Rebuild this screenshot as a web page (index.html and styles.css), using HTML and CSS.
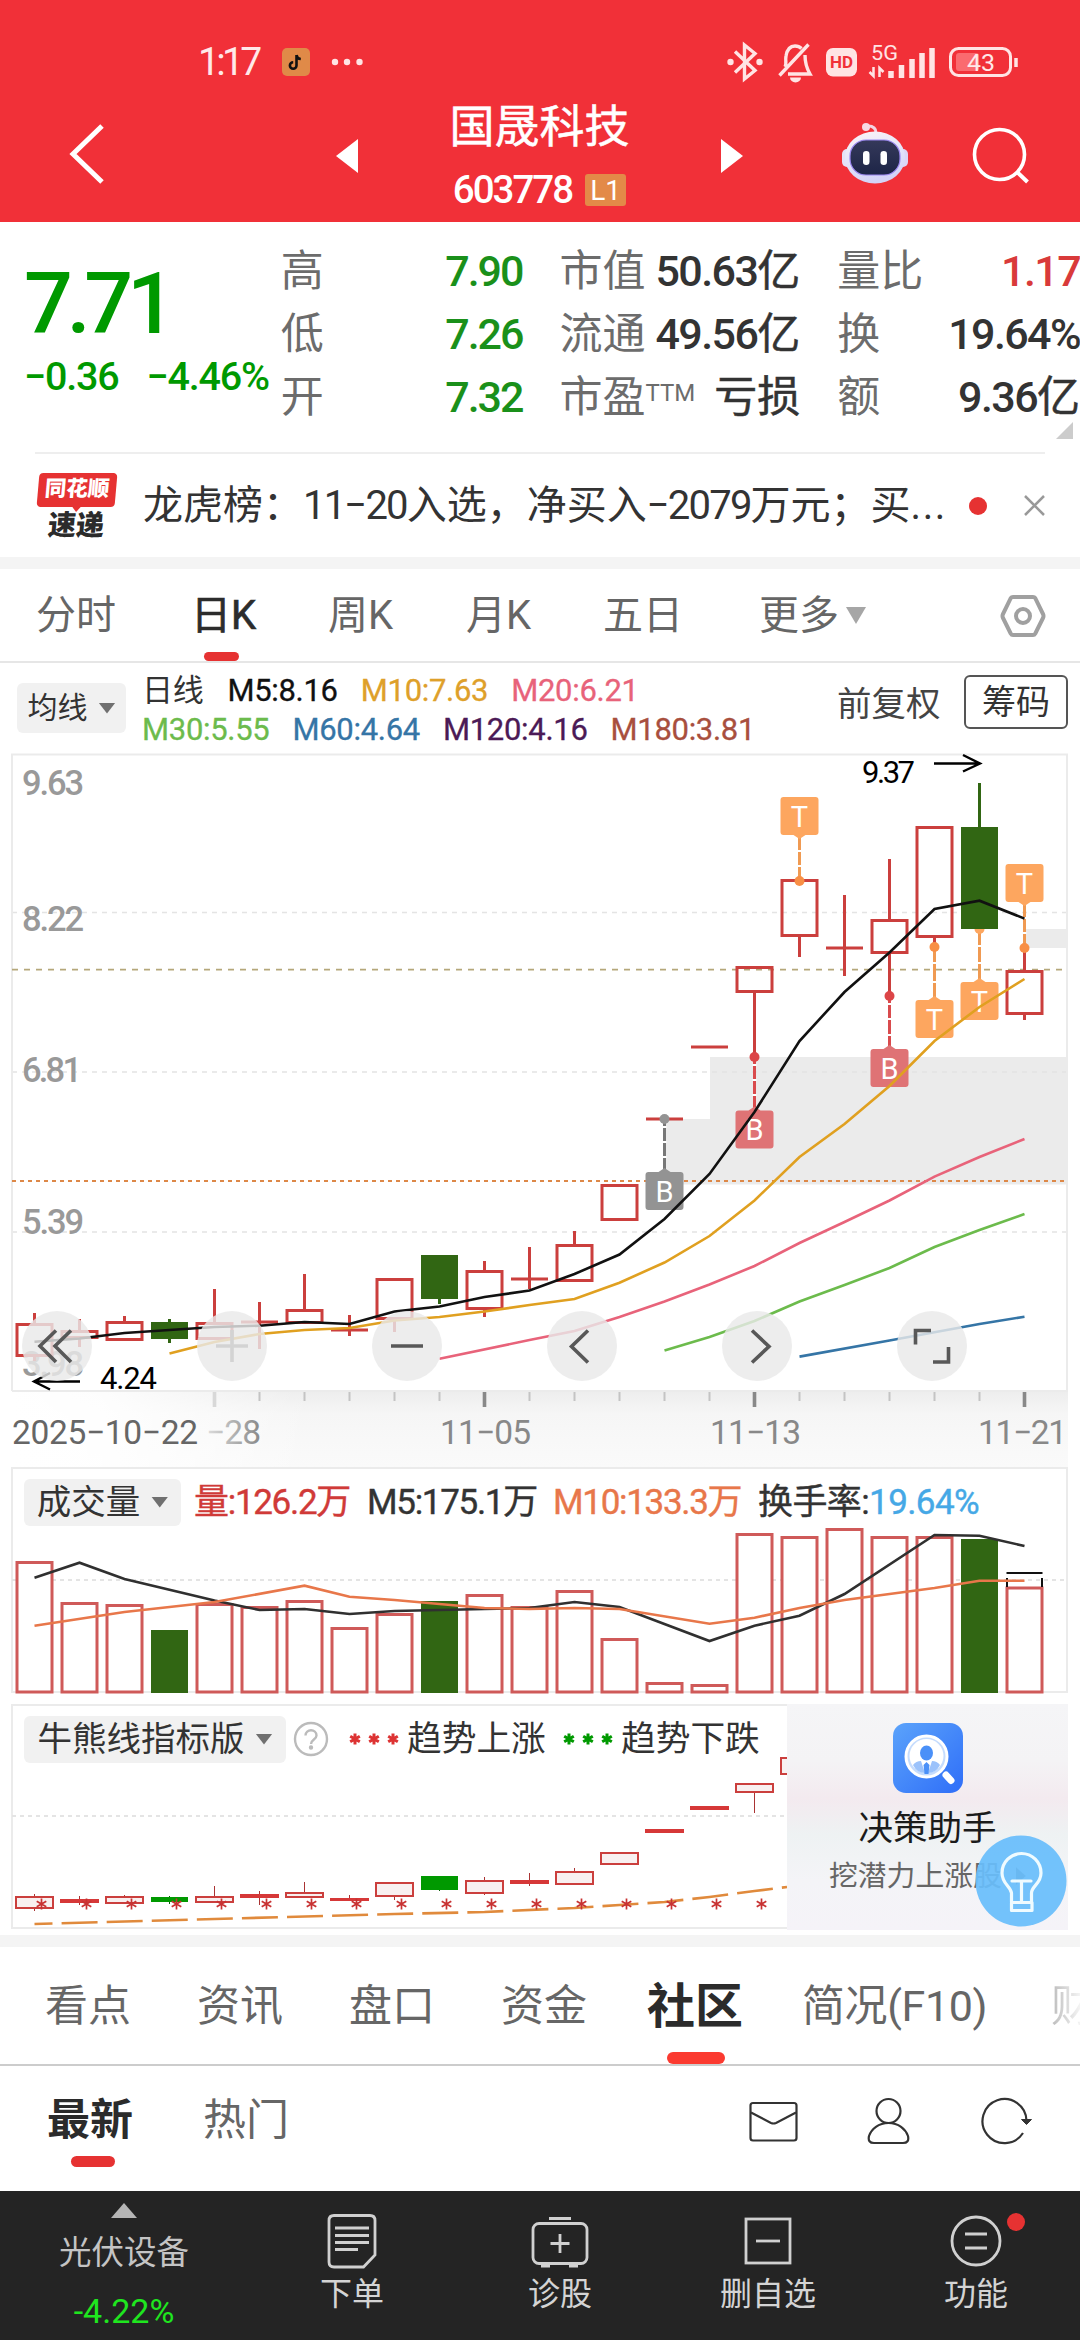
FILE: index.html
```html
<!DOCTYPE html>
<html lang="zh-CN">
<head>
<meta charset="utf-8">
<title>国晟科技 603778</title>
<link rel="stylesheet" href="styles.css">
</head>
<body>
<header class="top">
  <div class="status">
    <span class="clock">1:17</span>
    <svg class="app" width="28" height="28" viewBox="0 0 28 28"><rect width="28" height="28" rx="5" fill="#e08a48"/><path d="M14.5 7v10.500a3.300 3.300 0 1 1-3.300-3.300M14.500 7c.3 2.500 2 3.800 4.300 4" fill="none" stroke="#111" stroke-width="2.600"/></svg>
    <svg class="dots" width="32" height="8" viewBox="0 0 32 8" fill="#ffe4e4"><circle cx="4" cy="4" r="3.200"/><circle cx="16" cy="4" r="3.200"/><circle cx="28.500" cy="4" r="3.200"/></svg>
    <svg class="sys" width="300" height="44" viewBox="722 40 300 44" fill="none" stroke="#ffe4e4" stroke-width="3.400">
      <path d="M735 51.500l20 19-10.500 8.500V45l10.500 8.500-20 19"/><circle cx="730.500" cy="62" r="3.200" fill="#ffe4e4" stroke="none"/><circle cx="759.500" cy="62" r="3.200" fill="#ffe4e4" stroke="none"/>
      <path d="M785 67c2-3 0-6 1-11 1-6 4-10 9-10 3 0 5 1 6.500 2.500M805 55c0 7 1.500 13 5 19h-22M779.500 75.500l29-31"/><path d="M790 77.500h11a5.500 5 0 0 1-11 0z" fill="#ffe4e4" stroke="none"/>
      <rect x="826" y="48" width="31" height="28.500" rx="7" fill="#ffe4e4" stroke="none"/>
      <text x="830" y="68" class="hd" textLength="23" lengthAdjust="spacingAndGlyphs">HD</text>
      <text x="871" y="60" class="g5" textLength="27" lengthAdjust="spacingAndGlyphs">5G</text>
      <path d="M873.500 67v9l-4-4M879.500 77v-9l4 4" stroke-width="2.500"/>
      <path d="M891 78v-7M901.500 78V65M912 78V59M922 78V53M932 78V48" stroke-width="5.500"/>
      <rect x="950.500" y="48.500" width="60" height="27" rx="8" stroke-width="3"/><rect x="956" y="53" width="23" height="18" rx="3" fill="#fa6b6f" stroke="none"/><path d="M1016 58v9" stroke-width="3.500"/>
      <text x="967" y="70.500" class="bat" textLength="28" lengthAdjust="spacingAndGlyphs">43</text>
    </svg>
  </div>
  <div class="titlebar">
    <svg class="back" width="40" height="64" viewBox="66 122 40 64"><path d="M102 126L73 154l29 28" fill="none" stroke="#fff" stroke-width="5"/></svg>
    <svg class="prev" width="22" height="34" viewBox="0 0 22 34"><path d="M22 0v34L0 17z" fill="#fff"/></svg>
    <div class="name"><h1>国晟科技</h1><p><span>603778</span><b>L1</b></p></div>
    <svg class="next" width="22" height="34" viewBox="0 0 22 34"><path d="M0 0v34l22-17z" fill="#fff"/></svg>
    <svg class="robot" width="68" height="64" viewBox="841 121 68 64">
      <defs><linearGradient id="rb" x1="0" y1="0" x2=".3" y2="1"><stop offset="0" stop-color="#fdf3f6"/><stop offset=".5" stop-color="#e6e6fa"/><stop offset="1" stop-color="#d3d3f7"/></linearGradient><linearGradient id="rs" x1="0" y1="0" x2="0" y2="1"><stop offset="0" stop-color="#35395a"/><stop offset="1" stop-color="#1d2547"/></linearGradient></defs>
      <path d="M876 133c0-5-3-7-8-7" fill="none" stroke="#f3d3e2" stroke-width="3"/><circle cx="866" cy="127" r="4" fill="#f7d9e4"/>
      <rect x="842" y="149" width="12" height="18" rx="5" fill="#e4e3f8"/><rect x="896" y="149" width="12" height="18" rx="5" fill="#dcd6f6"/>
      <ellipse cx="875" cy="157.500" rx="30" ry="26" fill="url(#rb)"/>
      <rect x="850" y="140" width="50" height="35" rx="16" fill="url(#rs)" stroke="#9a86f0" stroke-width="1.200"/><rect x="863" y="151" width="6.500" height="14" rx="3.200" fill="#fff"/><rect x="880.500" y="151" width="6.500" height="14" rx="3.200" fill="#fff"/>
    </svg>
    <svg class="search" width="60" height="60" viewBox="970 125 60 60" fill="none" stroke="#fff" stroke-width="3.600"><circle cx="999.500" cy="154.500" r="25"/><path d="M1017 172l10.500 10" stroke-width="4"/></svg>
  </div>
</header>

<section class="quote">
  <div class="last"><strong>7.71</strong><p><span>−0.36</span><span>−4.46%</span></p></div>
  <dl class="c1"><dt>高</dt><dd>7.90</dd><dt>低</dt><dd>7.26</dd><dt>开</dt><dd>7.32</dd></dl>
  <dl class="c2"><dt>市值</dt><dd>50.63<i>亿</i></dd><dt>流通</dt><dd>49.56<i>亿</i></dd><dt>市盈<sup>TTM</sup></dt><dd><i>亏损</i></dd></dl>
  <dl class="c3"><dt>量比</dt><dd class="up">1.17</dd><dt>换</dt><dd>19.64%</dd><dt>额</dt><dd>9.36<i>亿</i></dd></dl>
  <svg class="corner" width="17" height="17" viewBox="0 0 17 17"><path d="M17 0v17H0z" fill="#ccc"/></svg>
</section>

<section class="news">
  <div class="brand"><span class="b1">同花顺</span><span class="b2">速递</span></div>
  <p>龙虎榜：<span>11−20</span>入选，净买入<span>−2079</span>万元；买<em>...</em></p>
  <i class="reddot"></i>
  <svg width="21" height="21" viewBox="0 0 21 21"><path d="M1 1l19 19M20 1L1 20" stroke="#999" stroke-width="2.500"/></svg>
</section>

<nav class="periods">
  <a class="p1">分时</a><a class="p2 on">日K</a><a class="p3">周K</a><a class="p4">月K</a><a class="p5">五日</a><a class="p6">更多</a>
  <svg class="more" width="20" height="17" viewBox="0 0 20 17"><path d="M0 0h20L10 17z" fill="#a6a6a6"/></svg>
  <svg class="hex" width="46" height="44" viewBox="0 0 46 44" fill="none" stroke="#a0a0a0" stroke-width="4"><path d="M13 3h20q1.500 0 2.300 1.200L43 20q1 2 0 4l-7.700 15.500Q34.500 41 33 41H13q-1.500 0-2.300-1.500L3 24q-1-2 0-4L10.700 4.200Q11.500 3 13 3z"/><circle cx="23" cy="22" r="7"/></svg>
</nav>

<section class="mas">
  <button class="pill">均线<i class="tri"></i></button>
  <div class="legend">
    <p><span class="dk day">日线</span><span class="bk">M5:8.16</span><span class="or">M10:7.63</span><span class="pk">M20:6.21</span></p>
    <p><span class="gr">M30:5.55</span><span class="bl">M60:4.64</span><span class="pu">M120:4.16</span><span class="br">M180:3.81</span></p>
  </div>
  <span class="adj">前复权</span><button class="chip">筹码</button>
</section>

<svg class="kline" width="1080" height="714" viewBox="0 753 1080 714">
  <defs>
    <linearGradient id="ax" x1="0" y1="0" x2="0" y2="1"><stop offset="0" stop-color="#ededed"/><stop offset=".3" stop-color="#f6f6f6"/><stop offset="1" stop-color="#fafafa"/></linearGradient>
    <linearGradient id="fade"><stop offset="0" stop-color="#fff"/><stop offset=".3" stop-color="#fff" stop-opacity=".9"/><stop offset="1" stop-color="#fff" stop-opacity="0"/></linearGradient>
    <linearGradient id="tf"><stop offset="0" stop-color="#ddd"/><stop offset="1" stop-color="#888"/></linearGradient>
  </defs>
  <rect x="12" y="1391" width="1056" height="76" fill="url(#ax)"/><rect x="12" y="1392" width="300" height="75" fill="url(#fade)"/>
  <path d="M664.500 1119H710v-62h358v127.500H664.500zM1024.500 929H1068v19h-43.500z" fill="#ebebeb"/>
  <path d="M12 912.500h1056M12 1072h1056M12 1232h1056" class="grid"/>
  <g class="ylab"><text x="22" y="795" textLength="62">9.63</text><text x="22" y="930.500" textLength="62">8.22</text><text x="22" y="1082" textLength="60">6.81</text><text x="22" y="1233.500" textLength="62">5.39</text><text x="22" y="1376" textLength="62">3.98</text></g>
  <path d="M12 1391V754.500h1055V1391M12 1391h1056" class="frame"/>
  <path d="M12 969.700h1056" stroke="#b5a77a" stroke-width="1.800" stroke-dasharray="6 6"/>
  <path d="M12 1181h1056" stroke="#dd8848" stroke-width="2.200" stroke-dasharray="4 4"/>
  <path class="candle" d="M17 1324.500h35v31h-35zM62 1331.500h35v6h-35zM107 1322.500h35v17h-35zM197 1323.500h35v15h-35zM287 1310.500h35v12h-35zM377 1279.500h35v39h-35zM467 1271.500h35v37h-35zM557 1245.500h35v35h-35zM602 1185.500h35v34h-35zM737 967.500h35v24h-35zM782 880.500h35v55h-35zM872 920.500h35v32h-35zM917 827.500h35v109h-35zM1007 971.500h35v42h-35z
  M34.500 1323v-10M34.500 1357v4M79.500 1330v-11M79.500 1338v9M124.500 1321v-5M214.500 1322v-33M304.500 1309v-35M394.500 1320v12M484.500 1270v-9M484.500 1310v7M574.500 1244v-13M754.500 993v64M799.500 937v20M889.500 919v-60M889.500 954v42M934.500 938v10M1024.500 970v-22M1024.500 1015v5
  M241 1322h37M259.500 1302v47M331 1330h37M349.500 1315v21M511 1279h37M529.500 1247v42M646 1119h37M691 1047h37M826 948h37M844.500 895v81"/>
  <path fill="#316613" d="M151 1322h37v17h-37zM168 1319h3v24h-3zM421 1255h37v44h-37zM438 1299h3v5h-3zM961 827h37v102h-37zM978 783h3v44h-3z"/>
  <g class="mark m-o"><path d="M799.500 836v45M1024.500 902v46M934.500 947v53M979.500 930v52"/><circle cx="799.500" cy="881" r="5"/><circle cx="1024.500" cy="948" r="5"/><circle cx="934.500" cy="947" r="5"/><path class="dot" d="M974.500 929a5 5 0 0 0 10 0z"/>
    <path class="dot" d="M783.500 797h32q3 0 3 3v32q0 3-3 3h-10l-6 4-6-4h-10q-3 0-3-3v-32q0-3 3-3zM1008.500 864h32q3 0 3 3v32q0 3-3 3h-10l-6 4-6-4h-10q-3 0-3-3v-32q0-3 3-3zM918.500 1000h10l6-4 6 4h10q3 0 3 3v32q0 3-3 3h-32q-3 0-3-3v-32q0-3 3-3zM963.500 982h10l6-4 6 4h10q3 0 3 3v32q0 3-3 3h-32q-3 0-3-3v-32q0-3 3-3z"/></g>
  <g class="mark m-r"><path d="M754.500 1057v53M889.500 996v53"/><circle cx="754.500" cy="1057" r="5"/><circle cx="889.500" cy="996" r="5"/><path class="dot" d="M738.500 1110.500h10l6-4 6 4h10q3 0 3 3v32q0 3-3 3h-32q-3 0-3-3v-32q0-3 3-3zM873.500 1049h10l6-4 6 4h10q3 0 3 3v32q0 3-3 3h-32q-3 0-3-3v-32q0-3 3-3z"/></g>
  <g class="mark m-g"><path d="M664.500 1119v53"/><circle cx="664.500" cy="1119" r="5"/><path class="dot" d="M648.500 1172h10l6-4 6 4h10q3 0 3 3v32q0 3-3 3h-32q-3 0-3-3v-32q0-3 3-3z"/></g>
  <path d="M799.500 850v2M799.500 865v2M1024.500 917v2M1024.500 932v2M934.500 962v2M934.500 981v2M979.500 945v2M979.500 962v2M754.500 1064v2M754.500 1079v2M754.500 1094v2M889.500 1003v2M889.500 1018v2M889.500 1034v2M664.500 1126v2M664.500 1141v2M664.500 1156v2" stroke="#fff" stroke-width="4"/>
  <g class="tag"><text x="799.500" y="827">T</text><text x="1024.500" y="894">T</text><text x="934.500" y="1030">T</text><text x="979.500" y="1012">T</text><text x="754.500" y="1140">B</text><text x="889.500" y="1078.500">B</text><text x="664.500" y="1201.500">B</text></g>
  <g class="ma">
    <path stroke="#111" d="M34.500 1341.700L79.500 1338.500 124.500 1333 169.500 1330 214.500 1327 259.500 1325.700 304.500 1322 349.500 1324 394.500 1311.500 439.500 1306.500 484.500 1297 529.500 1290.500 574.500 1274 619.500 1254.500 664.500 1219 709.500 1174 754.500 1112 799.500 1041 844.500 992 889.500 952.500 934.500 909 979.500 900.700 1024.500 918.600"/>
    <path stroke="#e0a020" d="M169.500 1353.500L214.500 1342 259.500 1334 304.500 1330 349.500 1328 394.500 1320.500 439.500 1317 484.500 1311.500 529.500 1305 574.500 1299 619.500 1282.700 664.500 1262.500 709.500 1236 754.500 1200.500 799.500 1157 844.500 1124 889.500 1086 934.500 1041 979.500 1007 1024.500 979"/>
    <path stroke="#e8637a" d="M439.500 1358.700L529.500 1340 574.500 1331 619.500 1317 664.500 1301.500 709.500 1284.500 754.500 1266 799.500 1243 844.500 1222 889.500 1200.500 934.500 1176.600 979.500 1157 1024.500 1139"/>
    <path stroke="#6cbb4c" d="M664.500 1350.600L709.500 1337 754.500 1321 799.500 1301.500 844.500 1285 889.500 1268 934.500 1247 979.500 1230 1024.500 1214"/>
    <path stroke="#3575a6" d="M799.500 1356.600L889.500 1340.500 979.500 1324 1024.500 1316.700"/>
  </g>
  <g class="ext"><text x="862" y="783" textLength="53">9.37</text><text x="100" y="1389" textLength="57">4.24</text><path d="M934 763.500h46M963 755l17 8.500-17 8M80 1381.500H34M50 1373l-16 8.500 16 8"/></g>
  <g fill="#e9e9e9" fill-opacity=".82"><circle cx="57" cy="1346" r="35"/><circle cx="232" cy="1346" r="35"/><circle cx="407" cy="1346" r="35"/><circle cx="582" cy="1346" r="35"/><circle cx="757" cy="1346" r="35"/><circle cx="932" cy="1346" r="35"/></g>
  <g fill="none" stroke="#585858" stroke-width="3.600"><path d="M56 1330.500L40 1346l16 16M71 1330.500L55 1346l16 16M391 1346h32M588 1330.500L571.500 1346.500l16.500 16M752 1330.500l17 16-17 16M931 1330.500h-15.500v14M933 1362h15.500v-15"/><path d="M216 1346h32M232 1330v32" stroke="#d3d3d3"/></g>
  <path stroke="#c4c4c4" stroke-width="2" d="M259.500 1392v9M304.500 1392v9M349.500 1392v9M394.500 1392v9M439.500 1392v9M529.500 1392v9M574.500 1392v9M619.500 1392v9M664.500 1392v9M709.500 1392v9M799.500 1392v9M844.500 1392v9M889.500 1392v9M934.500 1392v9M979.500 1392v9"/>
  <path stroke="#888" stroke-width="3.600" d="M484.500 1392v15M754.500 1392v15M1024.500 1392v15"/><path stroke="#d8d8d8" stroke-width="3.600" d="M214.500 1392v15"/>
  <g class="xlab"><text x="12" y="1444" textLength="186" fill="#666">2025−10−22</text><text x="206" y="1444" textLength="55" fill="url(#tf)">−28</text><text x="440" y="1444" textLength="91">11−05</text><text x="710" y="1444" textLength="91">11−13</text><text x="978" y="1444" textLength="89">11−21</text></g>
</svg>

<section class="panel vol">
  <svg class="plot" width="1080" height="237" viewBox="0 1467 1080 237">
    <path d="M12 1692V1468h1055v224z" class="frame"/><path d="M12 1580h1056" class="grid g2"/>
    <path class="bar" d="M17 1562.500h35V1692h-35zM62 1603.500h35V1692h-35zM107 1605.500h35V1692h-35zM197 1604.500h35V1692h-35zM242 1607.500h35V1692h-35zM287 1601.500h35V1692h-35zM332 1628.500h35V1692h-35zM377 1614.500h35V1692h-35zM467 1595.500h35V1692h-35zM512 1607.500h35V1692h-35zM557 1591.500h35V1692h-35zM602 1639.500h35V1692h-35zM647 1683.500h35V1692h-35zM692 1685.500h35V1692h-35zM737 1534.500h35V1692h-35zM782 1537.500h35V1692h-35zM827 1529.500h35V1692h-35zM872 1537.500h35V1692h-35zM917 1537.500h35V1692h-35zM1007 1588h35V1692h-35z"/>
    <path fill="#316613" d="M151 1630h37v63h-37zM421 1601h37v92h-37zM961 1539h37v154h-37z"/>
    <path d="M1006.500 1573h36M1007 1578v9M1042 1578v9" stroke="#111" stroke-width="2"/>
    <g class="ma"><path stroke="#303030" d="M34.500 1577.700L79.500 1562.700 124.500 1579 214.500 1600.500 259.500 1610 304.500 1609 349.500 1614 394.500 1611 439.500 1610 484.500 1609 529.500 1608 574.500 1602 619.500 1607 709.500 1641 754.500 1625.700 799.500 1615.700 844.500 1594 934.500 1535 979.500 1535.700 1024.500 1546"/><path stroke="#e8774a" d="M34.500 1625.700L124.500 1612 214.500 1602 304.500 1585.700 349.500 1596.700 394.500 1600 439.500 1604 484.500 1608 529.500 1609 574.500 1608 619.500 1609 709.500 1623.700 754.500 1617.700 799.500 1608 844.500 1600 934.500 1588 979.500 1580.700 1024.500 1580.700"/></g>
  </svg>
  <div class="head"><button class="pill big">成交量<i class="tri"></i></button><span class="v1">量:126.2万</span><span class="v2">M5:175.1万</span><span class="v3">M10:133.3万</span><span class="v4">换手率:<em>19.64%</em></span></div>
</section>

<section class="panel bull">
  <svg class="plot" width="1080" height="231" viewBox="0 1704 1080 231">
    <path d="M12 1928V1705h1055v223z" class="frame"/><path d="M12 1816h775" class="grid g2"/>
    <g class="mini"><path d="M34.500 1894v17M79.500 1896v9M124.500 1895v3M214.500 1886v10M259.500 1891v14M304.500 1882v10M349.500 1895v4M394.500 1896v4M484.500 1877v18M529.500 1873v13M574.500 1868v4M754.500 1793v20" stroke-width="1"/><path stroke="#075c07" stroke-width="1" d="M169.500 1896v8M439.500 1889v2"/>
    <path class="mb" d="M16 1897h37v11h-37zM106 1897h37v6h-37zM196 1897h37v5h-37zM286 1893h37v4h-37zM376 1883h37v13h-37zM466 1881h37v12h-37zM556 1872h37v12h-37zM601 1853h37v11h-37zM736 1784h37v8h-37zM787 1758h-6v16h6"/>
    <path class="mf" d="M60 1899h39v4H60zM240 1894h39v4h-39zM330 1898h39v3h-39zM510 1880h39v4h-39zM645 1829h39v4h-39zM690 1806h39v4h-39z"/>
    <path fill="#090" stroke="none" d="M151 1897h37v5h-37zM421 1876h37v14h-37z"/></g>
    <path d="M34.500 1924L214.500 1919 394.500 1914 484.500 1912 574.500 1908 619.500 1905 664.500 1902 709.500 1897 754.500 1891 787 1887" fill="none" stroke="#e08a3c" stroke-width="2.600" stroke-dasharray="36 9.100" stroke-dashoffset="18"/>
    <defs><path id="st" d="M0-5.500V5.500M-4.800-2.800L4.800 2.800M-4.800 2.800L4.800-2.800"/></defs>
    <g stroke="#c83232" stroke-width="1.700"><use href="#st" x="41.500" y="1904"/><use href="#st" x="86.500" y="1904"/><use href="#st" x="131.500" y="1904"/><use href="#st" x="176.500" y="1904"/><use href="#st" x="221.500" y="1904"/><use href="#st" x="266.500" y="1904"/><use href="#st" x="311.500" y="1904"/><use href="#st" x="356.500" y="1904"/><use href="#st" x="401.500" y="1904"/><use href="#st" x="446.500" y="1904"/><use href="#st" x="491.500" y="1904"/><use href="#st" x="536.500" y="1904"/><use href="#st" x="581.500" y="1904"/><use href="#st" x="626.500" y="1904"/><use href="#st" x="671.500" y="1904"/><use href="#st" x="716.500" y="1904"/><use href="#st" x="761.500" y="1904"/></g>
  </svg>
  <div class="head"><button class="pill big">牛熊线指标版<i class="tri"></i></button>
    <svg class="help" width="36" height="36" viewBox="0 0 36 36" fill="none" stroke="#bbb" stroke-width="2.400"><circle cx="18" cy="18" r="16"/><path d="M12.500 14.500c0-7 11-7 11 0 0 4-5.500 4-5.500 8.500" /><circle cx="18" cy="26.500" r="1" fill="#bbb"/></svg>
    <svg class="stars" width="54" height="16" viewBox="0 0 54 16" stroke="#d33" stroke-width="3"><use href="#st" x="7" y="8"/><use href="#st" x="26" y="8"/><use href="#st" x="45" y="8"/></svg><span class="t1">趋势上涨</span>
    <svg class="stars s2" width="54" height="16" viewBox="0 0 54 16" stroke="#090" stroke-width="3"><use href="#st" x="7" y="8"/><use href="#st" x="26" y="8"/><use href="#st" x="45" y="8"/></svg><span class="t2">趋势下跌</span></div>
  <aside class="card">
    <svg width="70" height="70" viewBox="0 0 70 70"><defs><linearGradient id="bi" x1="0" y1="0" x2="1" y2="1"><stop offset="0" stop-color="#5ba3fb"/><stop offset="1" stop-color="#2f6ef8"/></linearGradient></defs><rect width="70" height="70" rx="13" fill="url(#bi)"/><path d="M53 52l5 5.500" stroke="#fff" stroke-width="7" stroke-linecap="round"/><circle cx="33.500" cy="33.500" r="20.500" fill="#c5dcfd" stroke="#fff" stroke-width="3"/><circle cx="33.500" cy="33" r="17" fill="#fff"/><ellipse cx="33.500" cy="30" rx="6.500" ry="7.500" fill="#4a90f8"/><path d="M20 42q3-4 8-4l4 12q-8 0-12-8zM47 42q-3-4-8-4l-4 12q8 0 12-8z" fill="#9bc2fb"/><path d="M33.500 39l3 3-1 9h-4l-1-9z" fill="#4a90f8"/></svg>
    <strong>决策助手</strong><span>挖潜力上涨股 <i></i></span>
  </aside>
  <svg class="bulb" width="92" height="92" viewBox="0 0 92 92"><circle cx="46" cy="46" r="45.500" fill="#68bdfb" fill-opacity=".93"/><path d="M36.500 67V58c-1-7-9.500-9-9.500-20a19.500 19.500 0 0 1 39 0c0 11-9.500 13-9.500 20v9M36.500 67.500h20.500v8H36.500zM37 46h19M46.500 46v20" fill="none" stroke="#effbff" stroke-width="3.200" stroke-linejoin="round" stroke-linecap="round"/></svg>
</section>

<nav class="tabs">
  <a>看点</a><a>资讯</a><a>盘口</a><a>资金</a><a class="on">社区</a><a class="f10">简况(F10)</a><a class="cut">财</a>
</nav>

<section class="sub">
  <a class="on">最新</a><a>热门</a>
  <svg width="288" height="56" viewBox="745 2091 288 56" fill="none" stroke="#333" stroke-width="2.200"><rect x="750.500" y="2101" width="46" height="37.500" rx="2.500"/><path d="M751 2110.500l20 10.500q2.500 1 5 0l20-10.500"/><circle cx="888.500" cy="2109" r="12"/><path d="M888.500 2121c-10 0-17 6-19.500 13q-1.500 7 5 7h29q6.500 0 5-7c-2.500-7-9.500-13-19.500-13zM1023 2131a22 22 0 1 1 3.500-12"/><path d="M1021.500 2117.500h10l-5 5z" fill="#333" stroke-width="1"/></svg>
</section>

<footer>
  <div class="sector"><i></i><span>光伏设备</span><em>-4.22%</em></div>
  <a class="f1"><svg width="60" height="60" viewBox="322 2211 60 60"><path d="M334 2215.500h36q5 0 5 5V2255l-11.500 12H334q-5 0-5-5v-41.500q0-5 5-5zM335 2228h34M335 2235.500h34M335 2242.500h34M335 2249.500h23"/></svg>下单</a>
  <a class="f2"><svg width="60" height="60" viewBox="530 2211 60 60"><rect x="533" y="2223.500" width="54" height="40" rx="6"/><path d="M549 2218.500h22M560 2234v19M550.500 2243.500h19M541 2266h9M569 2266h9"/></svg>诊股</a>
  <a class="f3"><svg width="60" height="60" viewBox="738 2211 60 60"><rect x="746" y="2219" width="44" height="44"/><path d="M756 2241h24"/></svg>删自选</a>
  <a class="f4"><svg width="60" height="60" viewBox="946 2211 60 60"><circle cx="976" cy="2241" r="24"/><path d="M965 2234h22M965 2248h22"/></svg>功能<b></b></a>
</footer>
</body>
</html>
```
FILE: styles.css
```css
* { box-sizing: border-box; margin: 0; padding: 0; }
body { width: 1080px; height: 2340px; overflow: hidden; background: #fff; color: #333; font-family: Roboto, "Noto Sans CJK SC", sans-serif; font-size: 35px; line-height: 1; white-space: nowrap; }
svg { display: block; flex: none; }
i, em { font-style: normal; }
button { border: 0; font: inherit; color: #333; }

.top { height: 222px; background: #f13038; color: #fff; }
.status { height: 84px; padding: 40px 58px 0 198px; display: flex; align-items: center; }
.clock { width: 84px; font-size: 39px; letter-spacing: -3.700px; color: #ffe9e9; }
.dots { margin-left: 21px; }
.sys { margin-left: auto; }
.hd { font: bold 17px Roboto; fill: #f13038; stroke: none; }
.g5 { font: 20px Roboto; fill: #ffe4e4; stroke: none; }
.bat { font: 24px Roboto; fill: #ffe9e9; stroke: none; }
.titlebar { height: 138px; display: flex; align-items: flex-start; padding-left: 66px; }
.back { margin-top: 38px; }
.prev { margin: 55px 0 0 230px; }
.name { width: 363px; text-align: center; padding-top: 20px; }
.name h1 { font-size: 45px; font-weight: 400; line-height: 48px; -webkit-text-stroke: .5px #fff; }
.name p { display: flex; justify-content: center; align-items: center; gap: 13px; height: 34px; margin-top: 21px; font-size: 38.5px; font-weight: 500; }
.name p span { letter-spacing: -2px; }
.name b { width: 41px; height: 32px; border-radius: 3px; background: #e38a48; font-size: 28px; font-weight: 400; line-height: 33px; }
.next { margin-top: 55px; }
.robot { margin: 37px 0 0 98px; }
.search { margin: 41px 0 0 61px; }

.quote { height: 230px; position: relative; display: flex; padding-left: 24px; color: #333; }
.last { width: 255px; padding-top: 44px; color: #090; }
.last strong { display: block; font-size: 86px; line-height: 76px; font-weight: 500; letter-spacing: -6.200px; }
.last p { display: flex; gap: 28px; margin-top: 15px; font-size: 39.500px; line-height: 40px; font-weight: 500; letter-spacing: -1.200px; }
dl { display: grid; grid-template-columns: 90px 1fr; grid-auto-rows: 63px; padding-top: 18px; line-height: 62px; font-size: 43px; }
dt { color: #6c6c6c; }
dd { text-align: right; font-weight: 500; letter-spacing: -2px; }
dd i { font-weight: 400; letter-spacing: 0; -webkit-text-stroke: .5px #333; }
.c1 { width: 244px; padding-left: 2px; } .c1 dd { color: #1a901a; }
.c2 { width: 241px; margin-left: 37px; }
.c3 { width: 243px; margin-left: 37px; }
.c3 .up { color: #d93a3a; }
.c2 dd, .c3 dd { letter-spacing: -1.600px; }
.c2 dd i { letter-spacing: 0; }
sup { font-size: 24px; line-height: 0; vertical-align: 11px; }
.corner { position: absolute; left: 1056px; top: 200px; }

.news { height: 105px; margin: 0 35px; border-top: 2px solid #eee; display: flex; align-items: center; }
.brand { width: 82px; height: 66px; margin-right: 26px; font-weight: 900; text-align: center; position: relative; }
.brand span { display: block; }
.b1 { width: 78px; height: 34px; margin: 0 0 6px 3px; border-radius: 4px; background: #e63232; color: #fff; font-size: 21.500px; line-height: 32px; transform: skewX(-5deg); }
.b1::after { content: ""; position: absolute; left: 35px; top: 33px; width: 10px; height: 6px; background: #e63232; clip-path: polygon(0 0, 100% 0, 50% 100%); }
.b2 { font-size: 28px; line-height: 26px; color: #2b2b2b; transform: skewX(-5deg); }
.news p { width: 804px; font-size: 40px; line-height: 60px; }
.news p span { letter-spacing: -1.800px; }
.news p em { letter-spacing: 1.500px; }
.reddot { width: 18px; height: 18px; border-radius: 50%; background: #e63232; margin: 0 37px 0 22px; }

.periods { height: 106px; border-top: 12px solid #f4f4f4; border-bottom: 2px solid #e6e6e6; padding-left: 36px; display: flex; align-items: center; font-size: 40px; line-height: 60px; color: #666; }
.periods a { height: 92px; line-height: 94px; position: relative; }
.periods .on { color: #2c2c2c; -webkit-text-stroke: .7px #2c2c2c; }
.periods .on::after { content: ""; position: absolute; left: 13px; bottom: 0; width: 35px; height: 9px; border-radius: 4.500px; background: #e63232; }
.p1 { width: 155px; } .p2 { width: 137px; } .p3 { width: 138px; } .p4 { width: 137px; } .p5 { width: 156px; } .p6 { width: 87px; }
.more { margin-right: 134px; }
.hex { margin-top: 2px; }

.mas { height: 90px; display: flex; align-items: flex-start; padding-left: 17px; }
.pill { display: flex; align-items: center; justify-content: center; gap: 11px; width: 109px; height: 50px; margin-top: 20px; border-radius: 6px; background: #f1f1f1; font-size: 30px; }
.tri { width: 17px; height: 11px; background: #707070; clip-path: polygon(0 0, 100% 0, 50% 100%); }
.legend { width: 695px; margin: 8px 0 0 16px; font-size: 31px; letter-spacing: -.3px; -webkit-text-stroke: .3px; }
.legend p { height: 39px; line-height: 39px; display: flex; gap: 23px; }
.legend .day { -webkit-text-stroke: 0; margin-right: 1px; }
.bk { color: #111; } .or { color: #dea02a; } .pk { color: #e8637a; } .gr { color: #6cbb4c; } .bl { color: #3575a6; } .pu { color: #4c1a56; } .br { color: #a84f3e; }
.adj { width: 127px; line-height: 83px; font-size: 34.500px; color: #444; }
.chip { width: 104px; height: 54px; margin-top: 12px; border: 2px solid #555; border-radius: 6px; background: #fff; font-size: 34px; line-height: 48px; }

.frame { fill: none; stroke: #ebebeb; stroke-width: 2; }
.grid { stroke: #e4e4e4; stroke-width: 1.500; stroke-dasharray: 5 5; }
.g2 { stroke-dasharray: 4 4; stroke-width: 2; }
.ylab { font-size: 34.500px; font-weight: 500; fill: #999; }
.xlab { font-size: 33.500px; fill: #888; -webkit-text-stroke: .5px; }
.ext { font-size: 31px; fill: #000; }
.ext path { fill: none; stroke: #000; stroke-width: 2.400; }
.candle { fill: none; stroke: #cb3f3d; stroke-width: 3; }
.ma path { fill: none; stroke-width: 2.600; }
.mark path { stroke-width: 3; }
.mark .dot { stroke: none; }
.m-o { fill: #fda65f; stroke: #f09a52; }
.m-r { fill: #df7375; stroke: #d94b4d; }
.m-g { fill: #939393; stroke: #777; }
.mark circle { stroke: none; }
.m-o circle { fill: #f88f45; } .m-r circle { fill: #dc4547; }
.tag { font-size: 29px; fill: #fff; text-anchor: middle; }

.panel { position: relative; }
.vol { height: 237px; } .bull { height: 231px; }
.plot { position: absolute; left: 0; top: 0; }
.bar { fill: #fff; stroke: #cf5a59; stroke-width: 3; }
.head { position: relative; display: flex; align-items: center; padding: 11px 0 0 24px; height: 59px; font-size: 35px; color: #333; }
.head .pill { margin: 0; height: 47px; width: 157px; font-size: 34.500px; flex: none; }
.bull .pill { width: 262px; }
.v1 { width: 173px; margin-left: 13px; color: #d03a38; } .v2 { width: 186px; } .v3 { width: 205px; color: #e8774a; }
.v4 em { color: #45a8e6; }
.head span { letter-spacing: -1.300px; flex: none; -webkit-text-stroke: .4px; }
.head .v4 { letter-spacing: -.6px; }
.help { margin-left: 7px; }
.stars { margin-left: 19px; } .s2 { margin-left: 17px; }
.head .t1, .head .t2 { margin-left: 5px; width: 138px; font-size: 34.700px; letter-spacing: 0; -webkit-text-stroke: 0; }
.mini { stroke: #a33; stroke-width: 2; }
.mb { fill: #f8f0f0; stroke: #cb3f3d; }
.mf { fill: #d63838; stroke: none; }
.card { position: absolute; left: 787px; top: 0; width: 281px; height: 226px; padding-top: 19px; display: flex; flex-direction: column; align-items: center; background: linear-gradient(180deg, #f5f5f7 0, #f4f3f5 25%, #f3eaef 42%, #eef2f3 58%, #f4f4f7 78%, #f5f3f8 100%); }
.card strong { margin-top: 13px; font-size: 34.500px; font-weight: 400; line-height: 44px; color: #1b1b1b; }
.card span { width: 200px; margin-left: 3px; margin-top: 5px; font-size: 28.800px; line-height: 42px; color: #666; display: flex; align-items: center; gap: 14px; }
.card span i { width: 10px; height: 18px; background: #777; clip-path: polygon(0 0, 100% 50%, 0 100%); }
.bulb { position: absolute; left: 975px; top: 131px; }

.tabs { height: 131px; border-top: 12px solid #f4f4f4; border-bottom: 2px solid #ccc; padding-left: 45px; display: flex; font-size: 43px; color: #666; line-height: 119px; }
.tabs a { width: 152px; position: relative; }
.tabs .on { width: 155px; margin-left: -6px; color: #2b2b2b; font-weight: 700; font-size: 48px; }
.tabs .on::after { content: ""; position: absolute; left: 20px; bottom: 0; width: 58px; height: 12px; border-radius: 6px; background: #fb3a30; }
.tabs .f10 { width: 249px; letter-spacing: -.4px; }
.tabs .cut { width: 29px; overflow: hidden; color: transparent; background: linear-gradient(90deg, #bbb, #f4f4f4); -webkit-background-clip: text; background-clip: text; }

.sub { height: 125px; display: flex; align-items: center; padding-left: 47px; font-size: 43px; line-height: 100px; color: #666; }
.sub a { width: 156px; position: relative; margin-top: -18px; }
.sub .on { color: #2b2b2b; font-weight: 700; }
.sub .on::after { content: ""; position: absolute; left: 24px; bottom: 3px; width: 44px; height: 11px; border-radius: 5.500px; background: #e63232; }
.sub svg { margin: -16px 0 0 386px; }

footer { height: 149px; background: #242424; color: #d4d4d4; display: flex; font-size: 32px; }
footer a { width: 208px; padding-top: 20px; display: flex; flex-direction: column; align-items: center; line-height: 46px; position: relative; }
footer a svg { fill: none; stroke: #d0d0d0; stroke-width: 2.800; }
footer b { position: absolute; left: 135px; top: 22px; width: 18px; height: 18px; border-radius: 50%; background: #e63232; }
.sector { width: 248px; display: flex; flex-direction: column; align-items: center; padding: 12px 0 0; color: #c4c4c4; }
.sector i { width: 26px; height: 15px; background: #b5b5b5; clip-path: polygon(50% 0, 100% 100%, 0 100%); }
.sector span { line-height: 46px; margin-top: 12px; font-size: 32.500px; }
.sector em { color: #1fe61f; font-size: 34px; line-height: 40px; margin-top: 15px; }
```
